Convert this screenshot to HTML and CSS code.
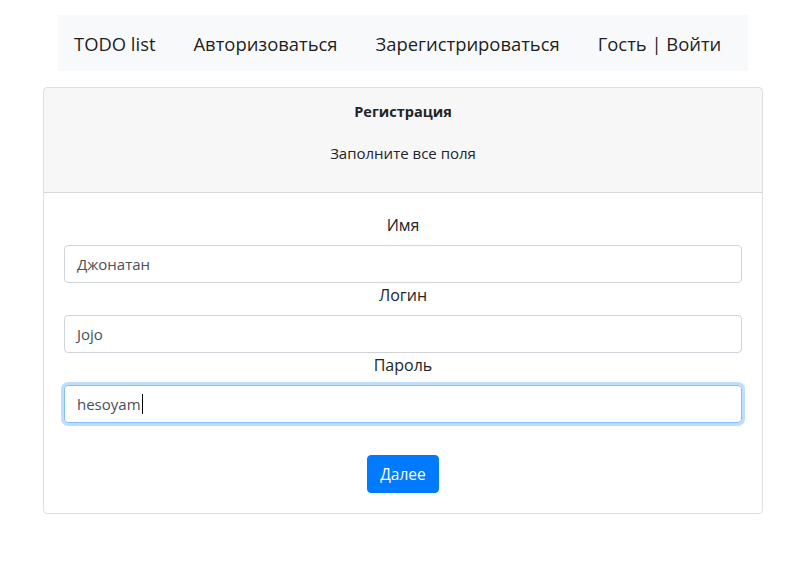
FILE: index.html
```html
<!DOCTYPE html>
<html lang="ru">
<head>
<meta charset="utf-8">
<title>Регистрация</title>
<link rel="stylesheet" href="styles.css">
</head>
<body>
<div class="container">
  <nav class="navbar">
    <a class="brand" href="#">TODO list</a>
    <a class="nav-link" href="#">Авторизоваться</a>
    <a class="nav-link" href="#">Зарегистрироваться</a>
    <a class="nav-link" href="#">Гость | Войти</a>
  </nav>
</div>
<div class="card">
  <div class="card-header">
    <div class="card-title">Регистрация</div>
    <p class="card-sub">Заполните все поля</p>
  </div>
  <div class="card-body">
    <div class="form-group">
      <label class="label">Имя</label>
      <div class="field">Джонатан</div>
    </div>
    <div class="form-group">
      <label class="label">Логин</label>
      <div class="field">Jojo</div>
    </div>
    <div class="form-group">
      <label class="label">Пароль</label>
      <div class="field focused">hesoyam<span class="caret"></span></div>
    </div>
    <div class="actions">
      <button class="btn" type="button">Далее</button>
    </div>
  </div>
</div>
</body>
</html>
```
FILE: styles.css
```css
* { box-sizing: border-box; }
body {
  margin: 0;
  font-family: "Open Sans", "Noto Sans", sans-serif;
  font-size: 16px;
  line-height: 24px;
  color: #212529;
  background: #fff;
}
.container {
  width: 690px;
  margin: 15px 0 0 58px;
}
.navbar {
  display: flex;
  align-items: center;
  height: 56px;
  padding: 1px 16px 0;
  background: #f8f9fa;
  gap: 38px;
}
.navbar a {
  color: rgba(0,0,0,.9);
  text-decoration: none;
  font-size: 18.4px;
  line-height: 30px;
  white-space: nowrap;
}
.card {
  width: 720px;
  margin: 16px 0 0 43px;
  border: 1px solid rgba(0,0,0,.125);
  border-radius: 4px;
  overflow: hidden;
}
.card-header {
  background: rgba(0,0,0,.03);
  border-bottom: 1px solid rgba(0,0,0,.125);
  padding: 12px 20px;
  text-align: center;
}
.card-title {
  font-weight: 700;
  font-size: 14.5px;
  margin-bottom: 17px;
}
.card-sub {
  margin: 0 0 15px;
  font-size: 15px;
}
.card-body {
  padding: 20px;
}
.form-group {
  display: flex;
  flex-direction: column;
}
.label {
  text-align: center;
  margin-bottom: 8px;
}
.field {
  height: 38px;
  padding: 6px 12px;
  border: 1px solid #ced4da;
  border-radius: 4px;
  color: #495057;
  font-size: 15px;
  display: flex;
  align-items: center;
}
.field.focused {
  border-color: #80bdff;
  box-shadow: 0 0 0 3px rgba(0,123,255,.25);
}
.caret {
  display: inline-block;
  width: 1px;
  height: 20px;
  background: #000;
  margin-left: 1px;
}
.actions {
  display: flex;
  justify-content: center;
  margin-top: 32px;
}
.btn {
  font-family: inherit;
  font-size: 15.5px;
  line-height: 24px;
  padding: 6px 12px;
  color: #fff;
  background: #007bff;
  border: 1px solid #007bff;
  border-radius: 4px;
}
```
